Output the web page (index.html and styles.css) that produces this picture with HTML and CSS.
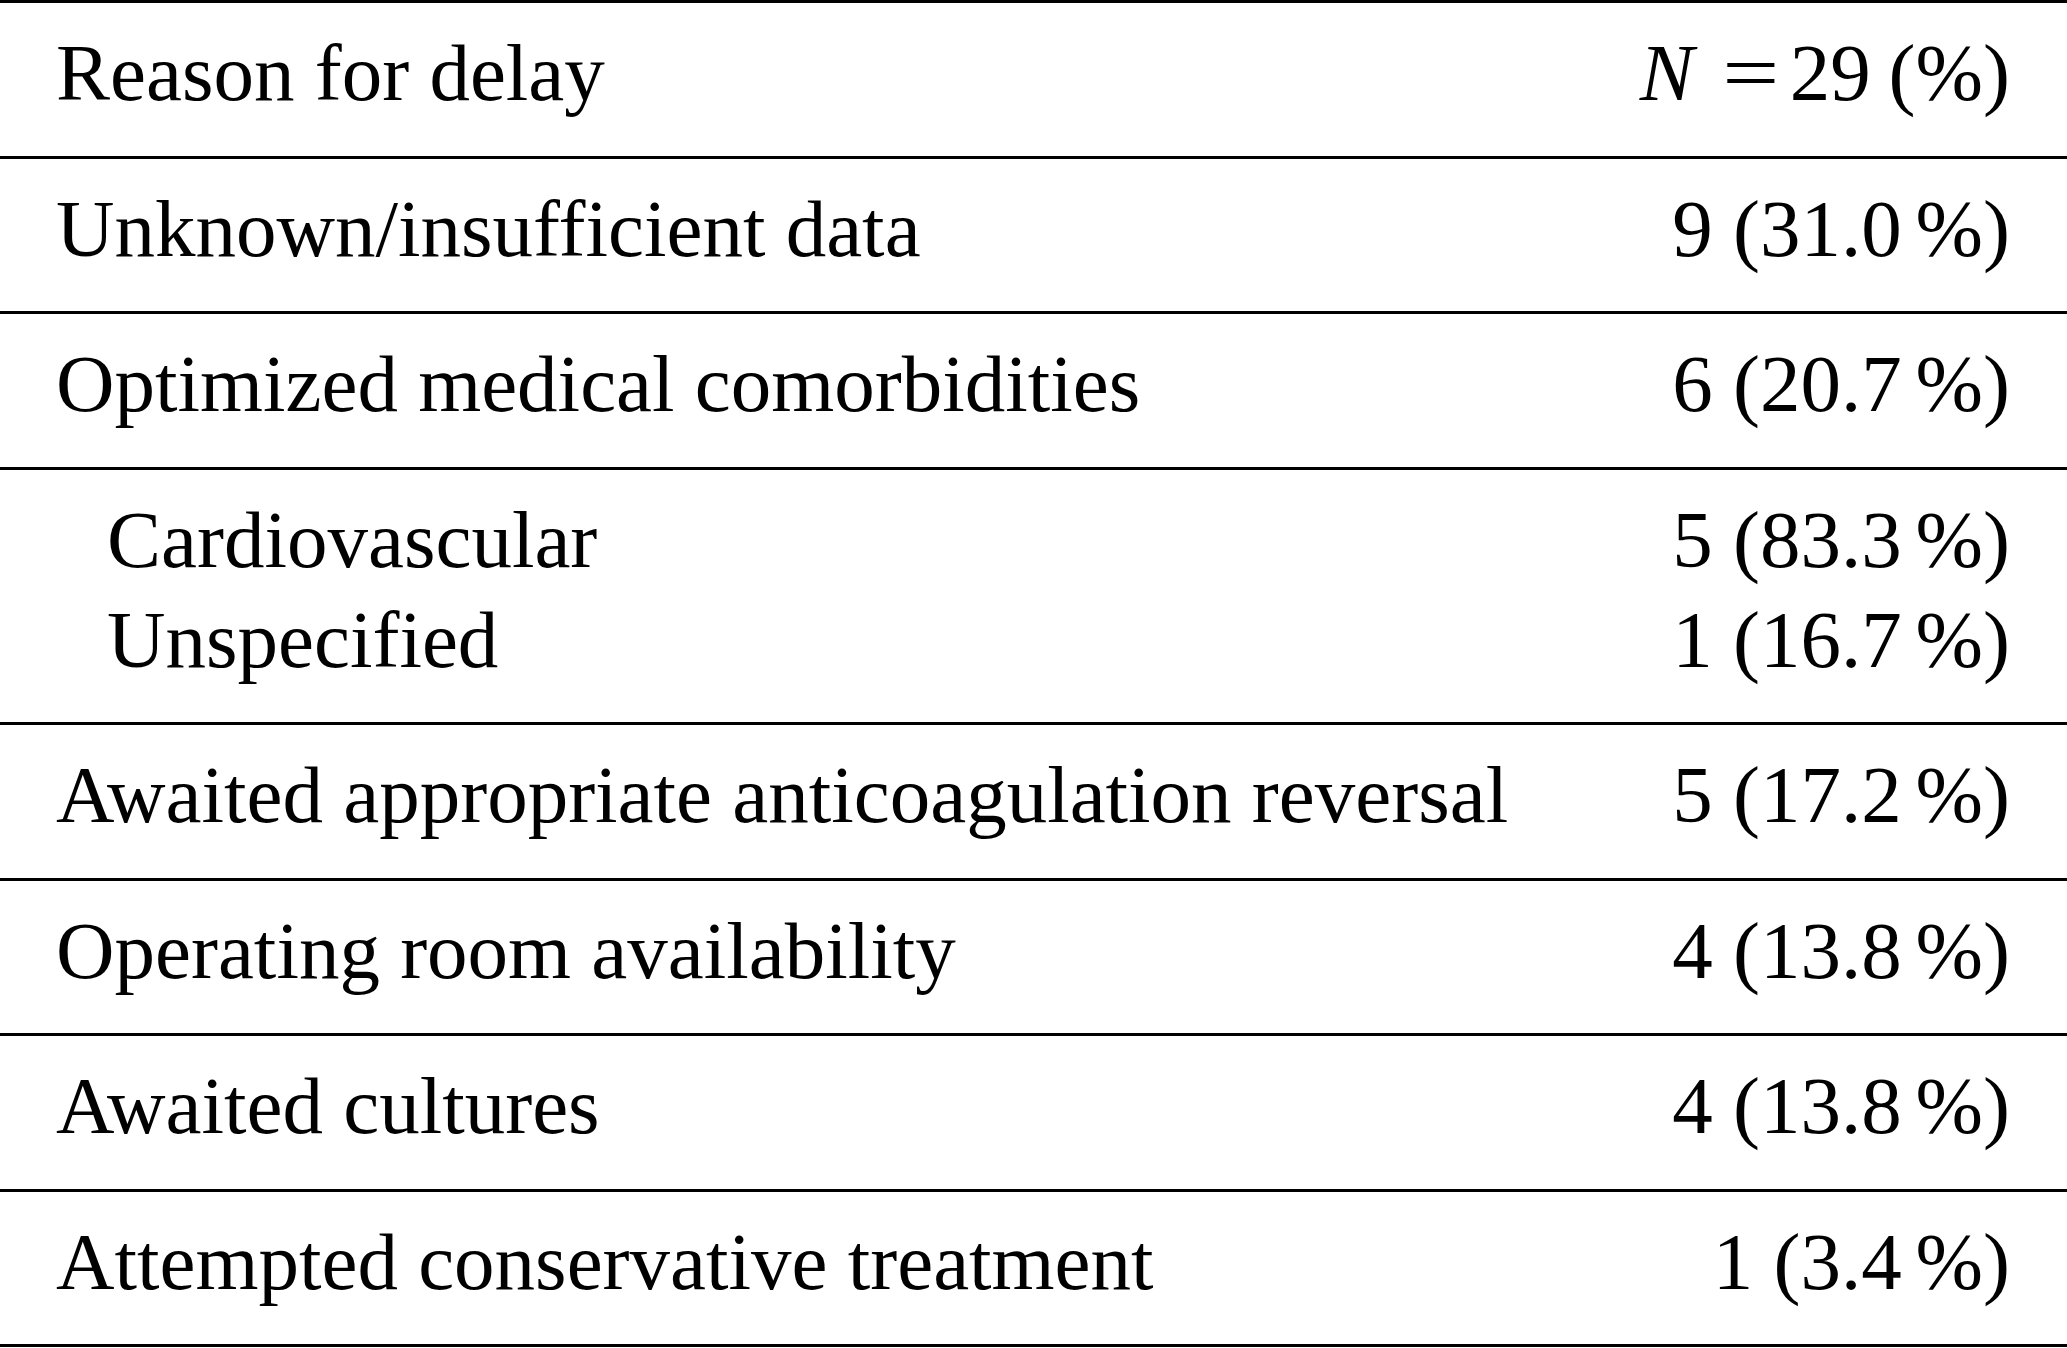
FILE: index.html
```html
<!DOCTYPE html>
<html lang="en">
<head>
<meta charset="utf-8">
<title>Reason for delay</title>
<link rel="stylesheet" href="styles.css">
</head>
<body>
<div class="table">
  <div class="row">
    <div class="label">Reason for delay</div>
    <div class="value"><span class="math-n">N</span><span class="eq">=</span>29<span class="pct">(%)</span></div>
  </div>
  <div class="row">
    <div class="label">Unknown/insufficient data</div>
    <div class="value">9 (31.0<span class="unit">%</span>)</div>
  </div>
  <div class="row">
    <div class="label">Optimized medical comorbidities</div>
    <div class="value">6 (20.7<span class="unit">%</span>)</div>
  </div>
  <div class="row group">
    <div class="sub">
      <div class="label indent">Cardiovascular</div>
      <div class="value">5 (83.3<span class="unit">%</span>)</div>
    </div>
    <div class="sub">
      <div class="label indent">Unspecified</div>
      <div class="value">1 (16.7<span class="unit">%</span>)</div>
    </div>
  </div>
  <div class="row">
    <div class="label">Awaited appropriate anticoagulation reversal</div>
    <div class="value">5 (17.2<span class="unit">%</span>)</div>
  </div>
  <div class="row">
    <div class="label">Operating room availability</div>
    <div class="value">4 (13.8<span class="unit">%</span>)</div>
  </div>
  <div class="row">
    <div class="label">Awaited cultures</div>
    <div class="value">4 (13.8<span class="unit">%</span>)</div>
  </div>
  <div class="row">
    <div class="label">Attempted conservative treatment</div>
    <div class="value">1 (3.4<span class="unit">%</span>)</div>
  </div>
</div>
</body>
</html>
```
FILE: styles.css
```css
html, body {
  margin: 0;
  padding: 0;
  background: #ffffff;
}

body {
  font-family: "Liberation Serif", "Times New Roman", serif;
  font-size: 81px;
  line-height: 100px;
  color: #000000;
}

.table {
  border-top: 3px solid #000000;
  width: 100%;
}

.row {
  display: flex;
  justify-content: space-between;
  padding: 20px 57px 32.5px 56px;
  border-bottom: 3px solid #000000;
}

.row.group {
  flex-direction: column;
}

.sub {
  display: flex;
  justify-content: space-between;
}

.label {
  white-space: nowrap;
}

.label.indent {
  padding-left: 51px;
}

.value {
  white-space: nowrap;
  text-align: right;
}

.unit {
  margin-left: 0.17em;
}

.math-n {
  font-style: italic;
}

.eq {
  display: inline-block;
  margin: 0 0.2em 0 0.42em;
  transform: scaleX(1.25);
}

.pct {
  margin-left: 0.22em;
}
```
